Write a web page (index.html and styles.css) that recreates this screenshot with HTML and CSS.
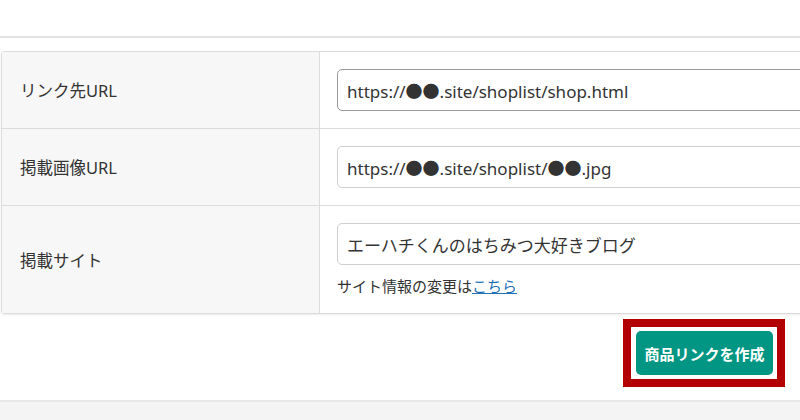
FILE: index.html
```html
<!DOCTYPE html>
<html lang="ja">
<head>
<meta charset="utf-8">
<link rel="stylesheet" href="styles.css">
</head>
<body>
<div class="topbar"></div>
<main class="panel">
  <div class="form-table">
    <div class="row">
      <div class="label">リンク先URL</div>
      <div class="field"><div class="input focus">https://●●.site/shoplist/shop.html</div></div>
    </div>
    <div class="row">
      <div class="label">掲載画像URL</div>
      <div class="field"><div class="input">https://●●.site/shoplist/●●.jpg</div></div>
    </div>
    <div class="row">
      <div class="label">掲載サイト</div>
      <div class="field">
        <div class="input">エーハチくんのはちみつ大好きブログ</div>
        <p class="help">サイト情報の変更は<a href="#">こちら</a></p>
      </div>
    </div>
  </div>
  <div class="actions">
    <div class="btn-wrap">
      <button class="btn">商品リンクを作成</button>
      <span class="highlight"></span>
    </div>
  </div>
</main>
<div class="footer"></div>
</body>
</html>
```
FILE: styles.css
```css
html, body {
  margin: 0;
  padding: 0;
  overflow: hidden;
  background: #fff;
  font-family: "Noto Sans", "Noto Sans CJK JP", sans-serif;
  color: #333;
}
.topbar {
  height: 36px;
  border-bottom: 2px solid #e2e2e2;
}
.panel {
  padding-top: 13px;
  height: 362px;
  box-sizing: border-box;
  width: 800px;
  overflow: hidden;
}
.form-table {
  margin-left: 1px;
  width: 860px;
  border: 1px solid #dcdcdc;
  border-radius: 3px;
  box-shadow: 0 1px 2px rgba(0,0,0,0.08);
}
.row {
  display: grid;
  grid-template-columns: 318px 1fr;
  border-top: 1px solid #dcdcdc;
}
.row:first-child { border-top: 0; }
.label {
  background: #f7f7f7;
  border-right: 1px solid #dcdcdc;
  padding-left: 18px;
  display: flex;
  align-items: center;
  font-size: 16.5px;
  color: #333;
}
.field {
  padding: 17px 17px;
}
.input {
  height: 42px;
  box-sizing: border-box;
  border: 1px solid #cfcfcf;
  border-radius: 5px;
  padding: 0 9px;
  display: flex;
  align-items: center;
  font-size: 17px;
  color: #333;
  background: #fff;
  white-space: nowrap;
}
.input.focus { border-color: #9a9a9a; }
.help {
  margin: 11px 0 0;
  font-size: 15px;
  line-height: 20px;
  color: #333;
}
.help a {
  color: #1f6fb8;
  text-decoration: underline;
}
.actions {
  display: flex;
  justify-content: flex-end;
  padding: 17px 27px 0 0;
}
.btn-wrap { position: relative; }
.btn {
  display: block;
  width: 137px;
  height: 44px;
  border: 0;
  border-radius: 5px;
  background: #009683;
  color: #fff;
  font-family: "Noto Sans CJK JP", sans-serif;
  font-weight: 700;
  font-size: 15px;
  padding: 0;
}
.highlight {
  position: absolute;
  left: -13px;
  top: -12px;
  width: 162px;
  height: 68px;
  box-sizing: border-box;
  border: 8px solid #b30000;
}
.footer {
  height: 20px;
  background: #f4f4f4;
  border-top: 2px solid #e8e8e8;
}
```
